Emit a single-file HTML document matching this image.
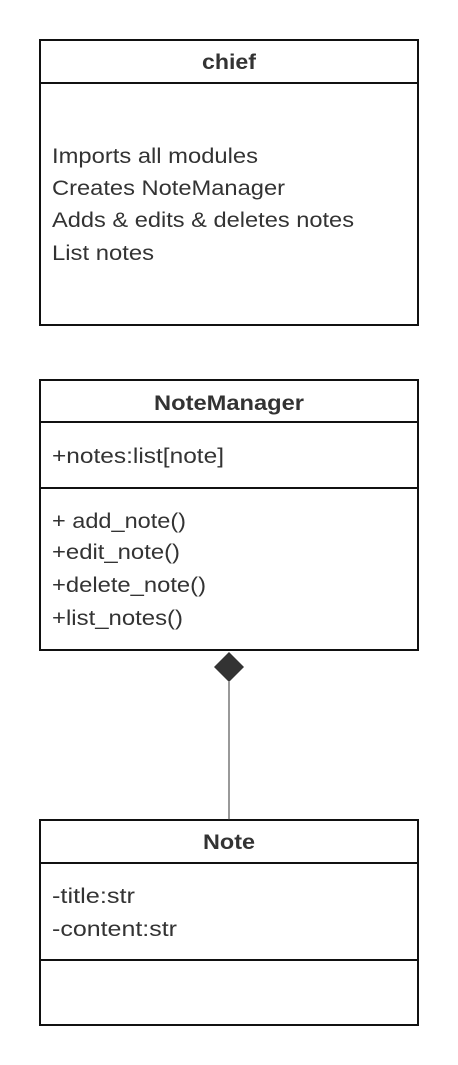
<!DOCTYPE html>
<html><head><style>html,body{margin:0;padding:0;background:#fff;}svg{display:block}</style></head><body>
<svg width="458" height="1065" xmlns="http://www.w3.org/2000/svg" font-family="Liberation Sans, sans-serif" fill="#333">
<g fill="none" stroke="#111" stroke-width="2">
<rect x="40" y="40" width="378" height="285"/>
<line x1="40" y1="83" x2="418" y2="83"/>
<rect x="40" y="380" width="378" height="270"/>
<line x1="40" y1="422" x2="418" y2="422"/>
<line x1="40" y1="488" x2="418" y2="488"/>
<rect x="40" y="820" width="378" height="205"/>
<line x1="40" y1="863" x2="418" y2="863"/>
<line x1="40" y1="960" x2="418" y2="960"/>
</g>
<line x1="229" y1="682" x2="229" y2="820" stroke="#333" stroke-width="1"/>
<polygon points="229,652 244,667 229,682 214,667" fill="#333"/>
<g font-size="21" font-weight="bold" lengthAdjust="spacingAndGlyphs">
<text x="202" y="69" textLength="54" lengthAdjust="spacingAndGlyphs">chief</text>
<text x="154" y="410" textLength="150" lengthAdjust="spacingAndGlyphs">NoteManager</text>
<text x="203" y="849" textLength="52" lengthAdjust="spacingAndGlyphs">Note</text>
</g>
<g font-size="21">
<text x="52" y="163" textLength="206" lengthAdjust="spacingAndGlyphs">Imports all modules</text>
<text x="52" y="195" textLength="233" lengthAdjust="spacingAndGlyphs">Creates NoteManager</text>
<text x="52" y="227" textLength="302" lengthAdjust="spacingAndGlyphs">Adds &amp; edits &amp; deletes notes</text>
<text x="52" y="260" textLength="102" lengthAdjust="spacingAndGlyphs">List notes</text>
<text x="52" y="463" textLength="172" lengthAdjust="spacingAndGlyphs">+notes:list[note]</text>
<text x="52" y="528" textLength="134" lengthAdjust="spacingAndGlyphs">+ add_note()</text>
<text x="52" y="559" textLength="128" lengthAdjust="spacingAndGlyphs">+edit_note()</text>
<text x="52" y="592" textLength="154" lengthAdjust="spacingAndGlyphs">+delete_note()</text>
<text x="52" y="625" textLength="131" lengthAdjust="spacingAndGlyphs">+list_notes()</text>
<text x="52" y="903" textLength="83" lengthAdjust="spacingAndGlyphs">-title:str</text>
<text x="52" y="936" textLength="125" lengthAdjust="spacingAndGlyphs">-content:str</text>
</g>
</svg>
</body></html>
